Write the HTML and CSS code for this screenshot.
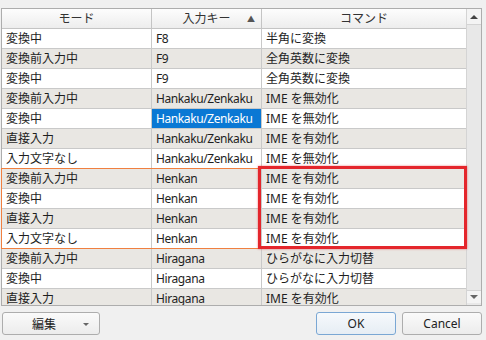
FILE: index.html
```html
<!DOCTYPE html>
<html lang="ja">
<head>
    <meta charset="UTF-8">
    <title>キー設定</title>
    <link rel="stylesheet" href="styles.css">
</head>
<body>

<div class="keymap">
    <div class="keymap-body">
        <div class="grid">
            <div class="row head">
                <div class="cell">モード</div>
                <div class="cell">入力キー<span class="sort">▲</span></div>
                <div class="cell">コマンド</div>
            </div>
            <div class="row"><div class="cell">変換中</div><div class="cell key">F8</div><div class="cell">半角に変換</div></div>
            <div class="row alt"><div class="cell">変換前入力中</div><div class="cell key">F9</div><div class="cell">全角英数に変換</div></div>
            <div class="row"><div class="cell">変換中</div><div class="cell key">F9</div><div class="cell">全角英数に変換</div></div>
            <div class="row alt"><div class="cell">変換前入力中</div><div class="cell key">Hankaku/Zenkaku</div><div class="cell">IME を無効化</div></div>
            <div class="row"><div class="cell">変換中</div><div class="cell key selected">Hankaku/Zenkaku</div><div class="cell">IME を無効化</div></div>
            <div class="row alt"><div class="cell">直接入力</div><div class="cell key">Hankaku/Zenkaku</div><div class="cell">IME を有効化</div></div>
            <div class="row"><div class="cell">入力文字なし</div><div class="cell key">Hankaku/Zenkaku</div><div class="cell">IME を無効化</div></div>
            <div class="row alt"><div class="cell">変換前入力中</div><div class="cell key">Henkan</div><div class="cell">IME を有効化</div></div>
            <div class="row"><div class="cell">変換中</div><div class="cell key">Henkan</div><div class="cell">IME を有効化</div></div>
            <div class="row alt"><div class="cell">直接入力</div><div class="cell key">Henkan</div><div class="cell">IME を有効化</div></div>
            <div class="row"><div class="cell">入力文字なし</div><div class="cell key">Henkan</div><div class="cell">IME を有効化</div></div>
            <div class="row alt"><div class="cell">変換前入力中</div><div class="cell key">Hiragana</div><div class="cell">ひらがなに入力切替</div></div>
            <div class="row"><div class="cell">変換中</div><div class="cell key">Hiragana</div><div class="cell">ひらがなに入力切替</div></div>
            <div class="row alt"><div class="cell">直接入力</div><div class="cell key">Hiragana</div><div class="cell">IME を有効化</div></div>
        </div>
        <div class="scrollbar">
            <div class="scroll-btn"><span class="arrow-up"></span></div>
            <div class="scroll-track"></div>
            <div class="scroll-btn down"><span class="arrow-down"></span></div>
        </div>
    </div>
    <!-- hover group and annotation -->
    <div class="group-hover"></div>
    <div class="highlight"></div>
</div>

<div class="footer">
    <button class="btn edit">編集<span class="caret"></span></button>
    <div class="actions">
        <button class="btn default">OK</button>
        <button class="btn">Cancel</button>
    </div>
</div>

</body>
</html>
```

FILE: styles.css
```css
body {
    font-family: "Noto Sans", "Noto Sans CJK JP", sans-serif;
    font-size: 12px;
    background-color: #f0f0f0;
    margin: 0;
    padding: 8px 0 0 1px;
    color: #1e1e1e;
    width: 481px;
}
.keymap {
    position: relative;
    height: 298px;
    border: 1px solid #adadad;
    box-sizing: border-box;
    background: #fff;
}
.keymap-body {
    display: flex;
    height: 100%;
    overflow: hidden;
}
.grid {
    width: 464px;
}
.row {
    display: grid;
    grid-template-columns: 150px 110px 204px;
    height: 20px;
    background: #fff;
}
.row.alt {
    background: #e9e7e3;
}
.cell {
    border-right: 1px solid #c9c9c9;
    border-bottom: 1px solid #c9c9c9;
    padding: 0 4px;
    line-height: 19px;
    white-space: nowrap;
    overflow: hidden;
}
.cell:last-child {
    border-right: none;
}
.key {
    letter-spacing: -0.4px;
}
.selected {
    background: #0a78d4;
    color: #fff;
}
.head {
    background: linear-gradient(#fdfdfd, #ececec);
}
.head .cell {
    text-align: center;
    color: #333;
    position: relative;
    border-color: #c4c4c4;
}
.sort {
    position: absolute;
    right: 6px;
    top: 0;
    font-size: 8px;
    color: #555;
}
.scrollbar {
    width: 15px;
    border-left: 1px solid #d4d4d4;
    background: #e8e8e8;
    display: flex;
    flex-direction: column;
}
.scroll-btn {
    height: 15px;
    background: #f4f4f4;
    border-bottom: 1px solid #d4d4d4;
    display: flex;
    align-items: center;
    justify-content: center;
}
.scroll-btn.down {
    border-bottom: none;
    border-top: 1px solid #d4d4d4;
    height: 12px;
    margin-bottom: 2px;
}
.scroll-track {
    flex: 1;
}
.arrow-up {
    border-left: 4px solid transparent;
    border-right: 4px solid transparent;
    border-bottom: 4px solid #444;
}
.arrow-down {
    border-left: 4px solid transparent;
    border-right: 4px solid transparent;
    border-top: 4px solid #666;
}
.group-hover {
    position: absolute;
    left: -1px;
    top: 159px;
    width: 465px;
    height: 81px;
    border: 1px solid #f08040;
    border-right: none;
    box-sizing: border-box;
}
.highlight {
    position: absolute;
    left: 256px;
    top: 157px;
    width: 209px;
    height: 83px;
    border: 3px solid #e4262c;
    box-sizing: border-box;
    box-shadow: 0 0 2px rgba(228, 38, 44, 0.6);
}
.footer {
    display: flex;
    justify-content: space-between;
    margin-top: 6px;
    padding-left: 1px;
}
.actions {
    display: flex;
    gap: 6px;
}
.btn {
    font-family: inherit;
    font-size: 12px;
    height: 23px;
    width: 80px;
    border: 1px solid #adadad;
    border-radius: 3px;
    background: linear-gradient(#fafafa, #ececec);
    color: #222;
    padding: 0;
}
.btn.default {
    border-color: #7aa7d4;
    background: linear-gradient(#f6f9fc, #e6edf4);
}
.btn.edit {
    width: 98px;
    position: relative;
    padding-right: 14px;
}
.caret {
    position: absolute;
    right: 10px;
    top: 10px;
    border-left: 3px solid transparent;
    border-right: 3px solid transparent;
    border-top: 3px solid #666;
}
```
